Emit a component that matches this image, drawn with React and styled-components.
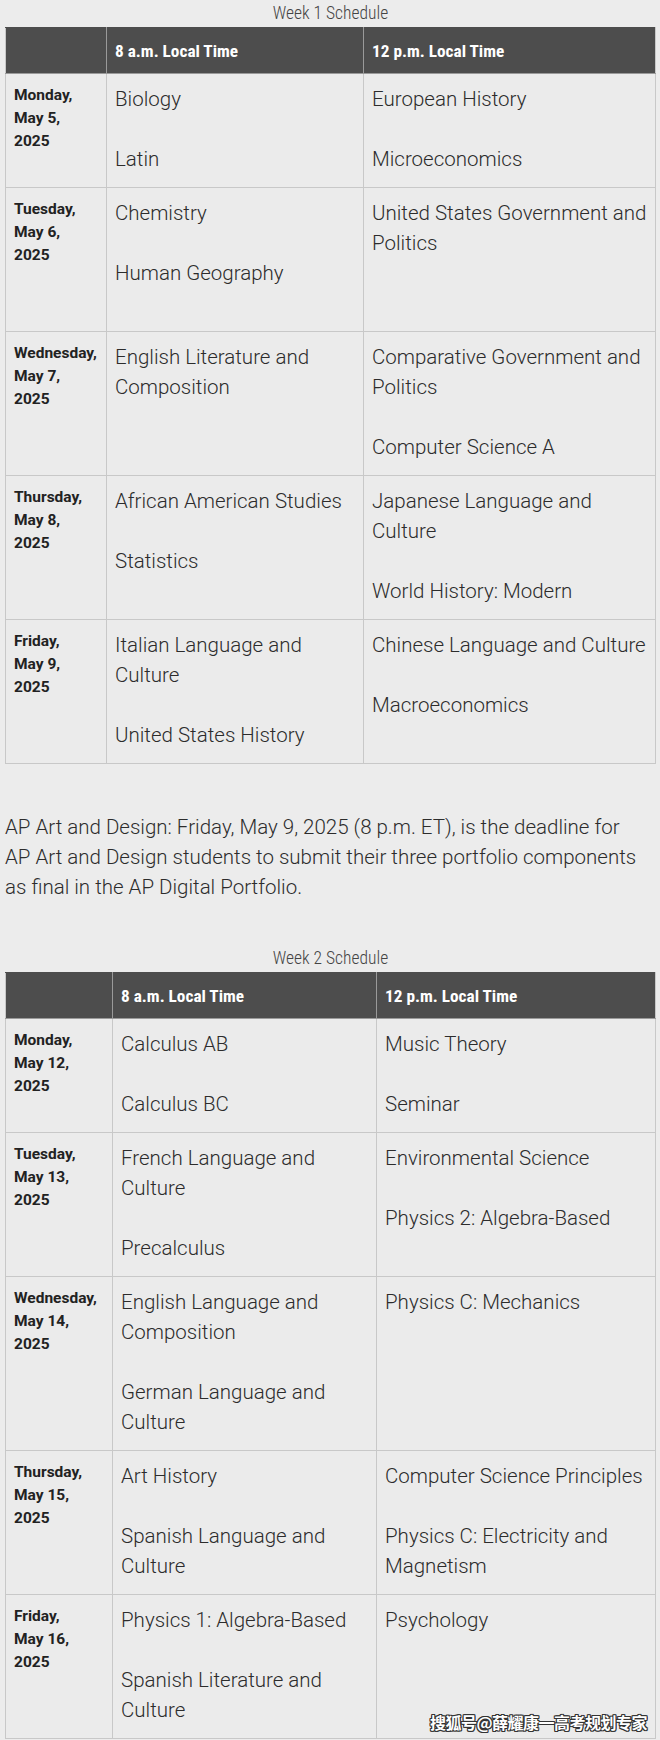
import React from "react";
import styled, { createGlobalStyle } from "styled-components";

const GlobalStyle = createGlobalStyle`
  html, body {
    margin: 0;
    padding: 0;
    background: #ececec;
  }
  body {
    font-family: Roboto, "Liberation Sans", sans-serif;
    color: #333;
  }
`;

const condensed = `"Roboto Condensed", Roboto, "Liberation Sans Narrow", sans-serif`;

const Page = styled.div`
  position: relative;
  width: 660px;
  padding: 3px 5px 0;
  box-sizing: border-box;
`;

const Table = styled.table`
  width: 650px;
  border-collapse: collapse;
  table-layout: fixed;
  background: #ebebeb;
`;

const Caption = styled.caption`
  caption-side: top;
  font-family: ${condensed};
  font-stretch: 80%;
  font-size: 17.5px;
  font-weight: 300;
  line-height: 20px;
  color: #444;
  padding-bottom: 4px;
  text-align: center;
`;

const HeadCell = styled.th`
  height: 45px;
  padding: 0 8px;
  background: #4d4d4d;
  color: #fff;
  text-align: left;
  font-family: ${condensed};
  font-stretch: 80%;
  font-size: 17.25px;
  font-weight: 700;
  border: 1px solid #9a9a9a;
  border-top-color: #4d4d4d;
  &:first-child { border-left-color: #c8c8c8; }
  &:last-child { border-right-color: #c8c8c8; }
`;

const DateCell = styled.td`
  vertical-align: top;
  padding: 10px 7px 13px 8px;
  border: 1px solid #c8c8c8;
  font-size: 15.5px;
  font-weight: 700;
  line-height: 23px;
  color: #222;
  height: ${(p) => p.$lines * 30}px;
`;

const ExamCell = styled.td`
  vertical-align: top;
  padding: 10px 8px 13px;
  border: 1px solid #c8c8c8;
  font-size: 20.5px;
  font-weight: 300;
  line-height: 30px;
  color: #2c2c2c;
  white-space: nowrap;
`;

const Entry = styled.div`
  & + & {
    margin-top: 30px;
  }
`;

const Note = styled.p`
  margin: 48px 0 46px;
  font-size: 20.5px;
  font-weight: 300;
  line-height: 30px;
  color: #2c2c2c;
  white-space: nowrap;
`;

const Watermark = styled.div`
  position: absolute;
  right: 13px;
  bottom: 6px;
  font-family: "Noto Sans CJK SC", sans-serif;
  font-weight: 700;
  font-size: 16px;
  line-height: 22px;
  color: #fff;
  letter-spacing: -0.5px;
  text-shadow: 1px 1px 0 #333, -1px -1px 0 #333, 1px -1px 0 #333,
    -1px 1px 0 #333, 0 1px 0 #333, 0 -1px 0 #333, 1px 0 0 #333,
    -1px 0 0 #333;
`;

const week1 = [
  { date: ["Monday,", "May 5,", "2025"], am: [["Biology"], ["Latin"]], pm: [["European History"], ["Microeconomics"]] },
  {
    date: ["Tuesday,", "May 6,", "2025"],
    am: [["Chemistry"], ["Human Geography"]],
    pm: [["United States Government and", "Politics"]],
    lines: 4,
  },
  {
    date: ["Wednesday,", "May 7,", "2025"],
    am: [["English Literature and", "Composition"]],
    pm: [["Comparative Government and", "Politics"], ["Computer Science A"]],
  },
  {
    date: ["Thursday,", "May 8,", "2025"],
    am: [["African American Studies"], ["Statistics"]],
    pm: [["Japanese Language and", "Culture"], ["World History: Modern"]],
  },
  {
    date: ["Friday,", "May 9,", "2025"],
    am: [["Italian Language and", "Culture"], ["United States History"]],
    pm: [["Chinese Language and Culture"], ["Macroeconomics"]],
  },
];

const week2 = [
  { date: ["Monday,", "May 12,", "2025"], am: [["Calculus AB"], ["Calculus BC"]], pm: [["Music Theory"], ["Seminar"]] },
  {
    date: ["Tuesday,", "May 13,", "2025"],
    am: [["French Language and", "Culture"], ["Precalculus"]],
    pm: [["Environmental Science"], ["Physics 2: Algebra-Based"]],
  },
  {
    date: ["Wednesday,", "May 14,", "2025"],
    am: [["English Language and", "Composition"], ["German Language and", "Culture"]],
    pm: [["Physics C: Mechanics"]],
  },
  {
    date: ["Thursday,", "May 15,", "2025"],
    am: [["Art History"], ["Spanish Language and", "Culture"]],
    pm: [["Computer Science Principles"], ["Physics C: Electricity and", "Magnetism"]],
  },
  {
    date: ["Friday,", "May 16,", "2025"],
    am: [["Physics 1: Algebra-Based"], ["Spanish Literature and", "Culture"]],
    pm: [["Psychology"]],
  },
];

const countLines = (items) =>
  items.reduce((n, it) => n + it.length, 0) + items.length - 1;

const Exams = ({ items }) => (
  <ExamCell>
    {items.map((lines, i) => (
      <Entry key={i}>
        {lines.map((l, j) => (
          <React.Fragment key={j}>
            {j > 0 && <br />}
            {l}
          </React.Fragment>
        ))}
      </Entry>
    ))}
  </ExamCell>
);

const Schedule = ({ title, rows, cols }) => (
  <Table>
    <Caption>{title}</Caption>
    <colgroup>
      {cols.map((w, i) => (
        <col key={i} style={{ width: w }} />
      ))}
    </colgroup>
    <thead>
      <tr>
        <HeadCell />
        <HeadCell>8 a.m. Local Time</HeadCell>
        <HeadCell>12 p.m. Local Time</HeadCell>
      </tr>
    </thead>
    <tbody>
      {rows.map((r, i) => {
        const lines = Math.max(countLines(r.am), countLines(r.pm), r.lines || 0);
        return (
          <tr key={i}>
            <DateCell $lines={lines}>
              {r.date.map((d, j) => (
                <div key={j}>{d}</div>
              ))}
            </DateCell>
            <Exams items={r.am} />
            <Exams items={r.pm} />
          </tr>
        );
      })}
    </tbody>
  </Table>
);

export default function App() {
  return (
    <>
      <GlobalStyle />
      <Page>
        <Schedule title="Week 1 Schedule" rows={week1} cols={[101, 257, 292]} />
        <Note>
          AP Art and Design: Friday, May 9, 2025 (8 p.m. ET), is the deadline for
          <br />
          AP Art and Design students to submit their three portfolio components
          <br />
          as final in the AP Digital Portfolio.
        </Note>
        <Schedule title="Week 2 Schedule" rows={week2} cols={[107, 264, 279]} />
        <Watermark>搜狐号@薛耀康一高考规划专家</Watermark>
      </Page>
    </>
  );
}
